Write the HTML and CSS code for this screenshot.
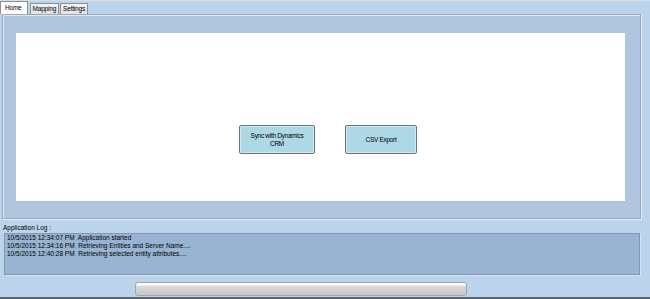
FILE: index.html
```html
<!DOCTYPE html>
<html>
<head>
<meta charset="utf-8">
<link rel="stylesheet" href="styles.css">
</head>
<body>
<div class="window">
  <div class="tabs">
    <div class="tab active">Home</div>
    <div class="tab">Mapping</div>
    <div class="tab">Settings</div>
  </div>
  <div class="tabpage">
    <div class="canvas">
      <div class="btn">Sync with Dynamics<br>CRM</div>
      <div class="btn">CSV Export</div>
    </div>
  </div>
  <div class="log-label">Application Log :</div>
  <div class="log">
    <div class="log-line">10/5/2015 12:34:07 PM&nbsp; Application started</div>
    <div class="log-line">10/5/2015 12:34:16 PM&nbsp; Retrieving Entities and Server Name....</div>
    <div class="log-line">10/5/2015 12:40:28 PM&nbsp; Retrieving selected entity attributes....</div>
  </div>
  <div class="progress-row">
    <div class="progress"></div>
  </div>
</div>
</body>
</html>
```

FILE: styles.css
```css
html, body {
  margin: 0;
  padding: 0;
}
body {
  width: 650px;
  height: 299px;
  overflow: hidden;
  background: #bbd3eb;
  font-family: "Liberation Sans", Arial, sans-serif;
  font-size: 6.5px;
  color: #000;
}
.window {
  height: 297px;
  border-bottom: 2px solid #5b6673;
  display: flex;
  flex-direction: column;
}
.tabs {
  display: flex;
  height: 14px;
  align-items: flex-end;
  padding-left: 0;
  gap: 1px;
  border-top: 1px solid #d6dde6;
  box-sizing: border-box;
}
.tab {
  height: 11px;
  line-height: 10px;
  padding: 0 2px;
  border: 1px solid #8c8f96;
  border-bottom: none;
  background: linear-gradient(#f4f4f4, #e2e2e2);
  box-sizing: border-box;
  font-size: 6.5px;
  letter-spacing: -0.2px;
}
.tab.active {
  height: 13px;
  line-height: 12px;
  background: #ffffff;
  padding: 0 5px 0 4px;
  margin-right: 1px;
}
.tabpage {
  margin: 0 9px 0 2px;
  height: 205px;
  box-sizing: border-box;
  background: #b0c5de;
  border: 1px solid #9ba9ba;
  box-shadow: inset 1px 1px 0 #dde7f2, 1px 1px 0 #e6eef7;
  padding: 18px 15px 17px 13px;
  display: flex;
}
.canvas {
  flex: 1;
  background: #ffffff;
  display: flex;
  align-items: flex-start;
  padding: 92px 0 0 223px;
  gap: 30px;
}
.btn {
  width: 76px;
  height: 29px;
  box-sizing: border-box;
  background: #add8e6;
  border: 1px solid #6f7378;
  border-radius: 2px;
  box-shadow: inset 0 0 0 1px #cfe9f2;
  display: flex;
  align-items: center;
  justify-content: center;
  text-align: center;
  line-height: 8px;
  font-size: 6.5px;
  letter-spacing: -0.3px;
}
.btn + .btn {
  width: 72px;
}
.log-label {
  margin: 4px 0 0 3px;
  height: 9px;
  line-height: 9px;
  font-size: 6.5px;
}
.log {
  margin: 1px 10px 0 4px;
  height: 42px;
  box-sizing: border-box;
  background: #98b4d2;
  border: 1px solid #8497ad;
  box-shadow: 1px 1px 0 #d6e3f1;
  padding: 0 0 0 2px;
}
.log-line {
  height: 8px;
  line-height: 8px;
  font-size: 6.5px;
  white-space: nowrap;
}
.progress-row {
  padding: 7px 0 0 135px;
}
.progress {
  width: 332px;
  height: 14px;
  box-sizing: border-box;
  border: 1px solid #a2a6ab;
  border-radius: 3px;
  background: linear-gradient(#fafafa 0%, #fafafa 15%, #d8d8d8 30%, #cdcdcd 70%, #c8c8c8 100%);
}
```
